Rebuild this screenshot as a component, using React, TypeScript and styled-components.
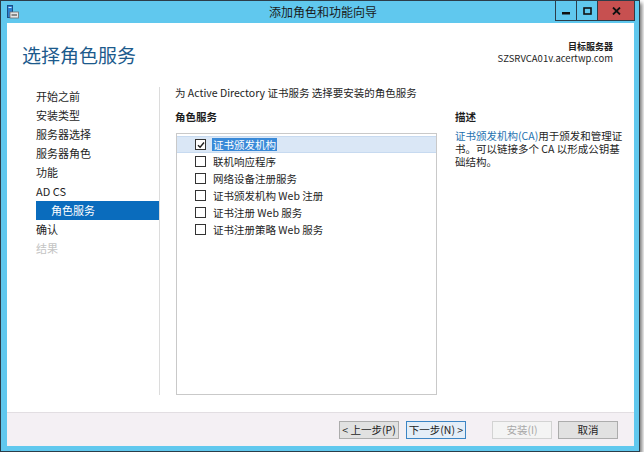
import React from "react";
import styled, { createGlobalStyle } from "styled-components";

const GlobalStyle = createGlobalStyle`
	html, body {
		margin: 0;
		padding: 0;
		background: #ffffff;
	}
	body {
		font-family: "Microsoft YaHei UI", "Noto Sans CJK SC", sans-serif;
		font-size: 11px;
		color: #1e1e1e;
	}
	* {
		box-sizing: border-box;
	}
`;

const Window = styled.div`
	width: 640px;
	height: 452px;
	border: 1px solid #2c3d49;
	background: #60c8ee;
	box-shadow: 2px 3px 4px rgba(0, 0, 0, 0.55);
	display: flex;
	flex-direction: column;
`;

const TitleBar = styled.div`
	height: 22px;
	display: flex;
	align-items: flex-start;
`;

const AppIcon = styled.div`
	width: 12px;
	height: 14px;
	margin: 4px 0 0 6px;
`;

const Caption = styled.div`
	flex: 1;
	text-align: center;
	line-height: 22px;
	font-size: 12px;
	color: #1a1a1a;
	padding-left: 72px;
`;

const CaptionButtons = styled.div`
	display: flex;
	margin: -1px 4px 0 0;
	height: 21px;
`;

const CaptionButton = styled.div<{ $close?: boolean; $w: number }>`
	width: ${(p) => p.$w}px;
	height: 21px;
	border: 1px solid #2c3d49;
	border-left-width: 0;
	background: ${(p) => (p.$close ? "#c75050" : "#60c8ee")};
	display: flex;
	align-items: center;
	justify-content: center;
	&:first-child {
		border-left-width: 1px;
	}
`;

const Client = styled.div`
	margin: 0 5px 5px 6px;
	height: 423px;
	background: #ffffff;
	display: flex;
	flex-direction: column;
`;

const Header = styled.div`
	height: 64px;
	display: flex;
	justify-content: space-between;
	align-items: flex-start;
	padding: 0 21px 0 15px;
`;

const PageTitle = styled.h1`
	margin: 20px 0 0;
	font-size: 19px;
	font-weight: normal;
	color: #1c5a8c;
	line-height: 24px;
`;

const Target = styled.div`
	margin-top: 18px;
	text-align: right;
	font-size: 9.5px;
	line-height: 11.5px;
	color: #1e1e1e;
`;

const TargetLabel = styled.div`
	font-weight: bold;
	font-size: 9px;
`;

const Body = styled.div`
	height: 308px;
	display: flex;
`;

const Nav = styled.div`
	width: 153px;
	border-right: 1px solid #dcdcdc;
	display: flex;
	flex-direction: column;
`;

const NavItem = styled.div<{ $active?: boolean; $disabled?: boolean; $sub?: boolean }>`
	height: 19px;
	line-height: 19px;
	font-size: 11px;
	margin-left: 29px;
	padding-left: ${(p) => (p.$sub ? 15 : 0)}px;
	background: ${(p) => (p.$active ? "#0a6cbd" : "transparent")};
	color: ${(p) => (p.$active ? "#ffffff" : p.$disabled ? "#c4c4c4" : "#1e1e1e")};
`;

const Main = styled.div`
	flex: 1;
	padding-left: 15px;
	display: flex;
	flex-direction: column;
`;

const Intro = styled.div`
	line-height: 12px;
	font-size: 10.5px;
`;

const Columns = styled.div`
	flex: 1;
	display: flex;
	margin-top: 11px;
`;

const ListColumn = styled.div`
	width: 262px;
	display: flex;
	flex-direction: column;
`;

const Heading = styled.div`
	font-weight: bold;
	font-size: 10.5px;
	line-height: 13px;
	height: 13px;
`;

const ListBox = styled.div`
	flex: 1;
	margin: 10px 0 0 1px;
	border: 1px solid #c9c9c9;
	padding-top: 2px;
	display: flex;
	flex-direction: column;
`;

const Row = styled.div<{ $selected?: boolean }>`
	height: 17px;
	display: flex;
	align-items: center;
	padding-left: 18px;
	background: ${(p) => (p.$selected ? "#dae7f6" : "transparent")};
	border-top: 1px solid ${(p) => (p.$selected ? "#c7daf0" : "transparent")};
	border-bottom: 1px solid ${(p) => (p.$selected ? "#c7daf0" : "transparent")};
`;

const Box = styled.div`
	width: 11px;
	height: 11px;
	border: 1px solid #333333;
	background: #ffffff;
	display: flex;
	align-items: center;
	justify-content: center;
	margin-right: 6px;
`;

const RowLabel = styled.span<{ $focused?: boolean }>`
	font-size: 10.5px;
	line-height: 13px;
	padding: 0 1px;
	background: ${(p) => (p.$focused ? "#3a8ad8" : "transparent")};
	color: ${(p) => (p.$focused ? "#ffffff" : "#1e1e1e")};
`;

const DescColumn = styled.div`
	margin-left: 18px;
	width: 170px;
	white-space: nowrap;
`;

const DescText = styled.div`
	margin-top: 6px;
	font-size: 10.5px;
	line-height: 13px;
	color: #1e1e1e;
`;

const DescLink = styled.span`
	color: #1f72b0;
`;

const Footer = styled.div`
	margin-top: auto;
	height: 34px;
	border-top: 1px solid #e2dee2;
	background: #f4f0f4;
	display: flex;
	justify-content: flex-end;
	align-items: flex-start;
	padding: 8px 16px 0 0;
`;

const Button = styled.div<{ $focus?: boolean; $disabled?: boolean; $gap?: number }>`
	width: 60px;
	height: 18px;
	margin-left: ${(p) => p.$gap ?? 7}px;
	border: 1px solid ${(p) => (p.$focus ? "#3c85c4" : p.$disabled ? "#d3d3d3" : "#acacac")};
	background: ${(p) => (p.$focus ? "#e4eef8" : p.$disabled ? "#f4f4f4" : "#e1e1e1")};
	color: ${(p) => (p.$disabled ? "#a8a8a8" : "#1e1e1e")};
	font-size: 10.5px;
	line-height: 16px;
	text-align: center;
	white-space: nowrap;
`;

const navItems = [
	{ label: "开始之前" },
	{ label: "安装类型" },
	{ label: "服务器选择" },
	{ label: "服务器角色" },
	{ label: "功能" },
	{ label: "AD CS" },
	{ label: "角色服务", sub: true, active: true },
	{ label: "确认" },
	{ label: "结果", disabled: true },
];

const roles = [
	{ label: "证书颁发机构", checked: true },
	{ label: "联机响应程序" },
	{ label: "网络设备注册服务" },
	{ label: "证书颁发机构 Web 注册" },
	{ label: "证书注册 Web 服务" },
	{ label: "证书注册策略 Web 服务" },
];

function ServerIcon() {
	return (
		<svg width="12" height="14" viewBox="0 0 12 14">
			<rect x="0.5" y="0.5" width="5" height="12" fill="#2a7fd0" stroke="#1b4f86" />
			<rect x="1.5" y="2" width="3" height="1" fill="#cfe6ff" />
			<rect x="3" y="7" width="8.5" height="6" fill="#e6e6e6" stroke="#6d6d6d" strokeWidth="0.8" />
			<rect x="4.5" y="9" width="5.5" height="2" fill="#8a8a8a" />
		</svg>
	);
}

function Check() {
	return (
		<svg width="8" height="8" viewBox="0 0 8 8">
			<path d="M1 4.2 L3.1 6.3 L7 1.5" fill="none" stroke="#1e1e1e" strokeWidth="1.4" />
		</svg>
	);
}

export default function App() {
	return (
		<>
			<GlobalStyle />
			<Window>
				<TitleBar>
					<AppIcon>
						<ServerIcon />
					</AppIcon>
					<Caption>添加角色和功能向导</Caption>
					<CaptionButtons>
						<CaptionButton $w={22}>
							<svg width="8" height="8" viewBox="0 0 8 8">
								<rect x="0" y="5" width="8" height="2.5" fill="#111" />
							</svg>
						</CaptionButton>
						<CaptionButton $w={21}>
							<svg width="9" height="8" viewBox="0 0 9 8">
								<rect x="1" y="1" width="7" height="6" fill="none" stroke="#111" strokeWidth="1.6" />
							</svg>
						</CaptionButton>
						<CaptionButton $w={37} $close>
							<svg width="9" height="8" viewBox="0 0 9 8">
								<path d="M1 0.5 L8 7.5 M8 0.5 L1 7.5" stroke="#111" strokeWidth="1.8" />
							</svg>
						</CaptionButton>
					</CaptionButtons>
				</TitleBar>
				<Client>
					<Header>
						<PageTitle>选择角色服务</PageTitle>
						<Target>
							<TargetLabel>目标服务器</TargetLabel>
							<div>SZSRVCA01v.acertwp.com</div>
						</Target>
					</Header>
					<Body>
						<Nav>
							{navItems.map((item, i) => (
								<NavItem key={i} $active={item.active} $sub={item.sub} $disabled={item.disabled}>
									{item.label}
								</NavItem>
							))}
						</Nav>
						<Main>
							<Intro>为 Active Directory 证书服务 选择要安装的角色服务</Intro>
							<Columns>
								<ListColumn>
									<Heading>角色服务</Heading>
									<ListBox>
										{roles.map((role, i) => (
											<Row key={i} $selected={i === 0}>
												<Box>{role.checked && <Check />}</Box>
												<RowLabel $focused={i === 0}>{role.label}</RowLabel>
											</Row>
										))}
									</ListBox>
								</ListColumn>
								<DescColumn>
									<Heading>描述</Heading>
									<DescText>
										<DescLink>证书颁发机构(CA)</DescLink>用于颁发和管理证
										<br />
										书。可以链接多个 CA 以形成公钥基
										<br />
										础结构。
									</DescText>
								</DescColumn>
							</Columns>
						</Main>
					</Body>
					<Footer>
						<Button>&lt; 上一步(P)</Button>
						<Button $focus>下一步(N) &gt;</Button>
						<Button $disabled $gap={26}>安装(I)</Button>
						<Button $gap={6}>取消</Button>
					</Footer>
				</Client>
			</Window>
		</>
	);
}
